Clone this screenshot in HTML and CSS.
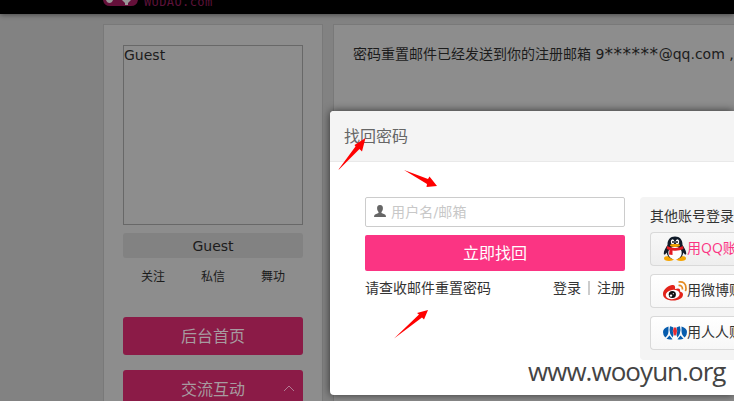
FILE: index.html
```html
<!DOCTYPE html>
<html lang="zh-CN">
<head>
<meta charset="utf-8">
<title>找回密码</title>
<link rel="stylesheet" href="styles.css">
</head>
<body>
<header class="topbar">
  <svg class="logo" width="36" height="7" viewBox="0 0 36 7"><path d="M0 0H35Q34 6 28 6H7Q1 6 0 0Z" fill="#65103a"/><path d="M3 0H10Q9 3 6.500 3Q4 3 3 0ZM19 0H28L25 3V5H22V3Z" fill="#999"/></svg>
  <span class="brand">WUDAO.com</span>
</header>
<div class="page">
  <aside class="sidebar">
    <div class="avatar">Guest</div>
    <div class="name">Guest</div>
    <nav class="links"><span>关注</span><span>私信</span><span>舞功</span></nav>
    <div class="menu">后台首页</div>
    <div class="menu">交流互动<svg class="caret" width="12" height="7" viewBox="0 0 12 7"><path d="M1 6L6 1L11 6" fill="none" stroke="#b17b93"/></svg></div>
  </aside>
  <main class="content">密码重置邮件已经发送到你的注册邮箱 <span>9<span class="stars">******</span>@qq.com</span> ,</main>
</div>
<section class="dialog">
  <h1 class="dialog-title">找回密码</h1>
  <div class="dialog-body">
    <div class="form">
      <div class="field">
        <svg width="12" height="12" viewBox="0 0 12 12"><path d="M6 0C3.800 0 2.900 1.500 3.100 3.600C3.200 5.300 3.800 6.200 4.500 7V8L1 9.500Q0 10 0 12H12Q12 10 11 9.500L7.500 8V7C8.300 6.200 8.800 5.300 8.900 3.600C9.100 1.500 8.200 0 6 0Z" fill="#666"/></svg>
        <span>用户名/邮箱</span>
      </div>
      <div class="submit">立即找回</div>
      <div class="hint"><span>请查收邮件重置密码</span><span class="auth">登录<i></i>注册</span></div>
    </div>
    <div class="social">
      <div class="social-title">其他账号登录</div>
      <div class="account qq">
        <svg width="24" height="26" viewBox="0 0 24 26"><ellipse cx="6" cy="22.500" rx="5" ry="2.400" fill="#f5a400"/><ellipse cx="18" cy="22.500" rx="5" ry="2.400" fill="#f5a400"/><path d="M12 .5C7 .5 4.300 4 4.500 9C2.500 12 0 16 1 18.500C2 19 3 17.500 3.700 16.500C4.500 21 7 23 12 23S19.500 21 20.300 16.500C21 17.500 22 19 23 18.500C24 16 21.500 12 19.500 9C19.700 4 17 .5 12 .5Z" fill="#111b29"/><ellipse cx="12" cy="17" rx="6.700" ry="6.500" fill="#fff"/><ellipse cx="9.600" cy="5.700" rx="1.800" ry="2.500" fill="#fff"/><ellipse cx="14.400" cy="5.700" rx="1.800" ry="2.500" fill="#fff"/><circle cx="10" cy="6" r=".9"/><circle cx="14" cy="6" r=".9"/><ellipse cx="12" cy="9.500" rx="5" ry="1.400" fill="#f5a400"/><path d="M4 10Q12 14 20 10L20.500 13Q15 15.500 9.500 14.500V19L6 18.500L6.500 14Q4.500 13.500 3.700 12.500Z" fill="#e21b23"/></svg><span>用QQ账</span>
      </div>
      <div class="account">
        <svg width="24" height="20" viewBox="0 0 24 20"><path d="M9 4C4 5 0 9 0 13C0 17 4 19.500 10 19.500C16 19.500 20 17 20 13.500C20 11.500 18.500 11 17 10.500C17.500 8 16.500 6.500 12 8C12.500 5 11.500 3.500 9 4Z" fill="#e2231a"/><ellipse cx="9.700" cy="13.500" rx="7" ry="4.600" fill="#fff" transform="rotate(-8 9.700 13.500)"/><circle cx="9.300" cy="13.500" r="3.600" fill="#111"/><circle cx="8" cy="14.600" r="1.200" fill="#fff"/><circle cx="10.300" cy="12.700" r=".6" fill="#fff"/><path d="M15.500 1Q23 0 23 7.500Q23 9 22.300 10M15.500 4.500Q19.500 4 19.500 8.500" fill="none" stroke="#e58b20" stroke-width="1.700"/></svg><span>用微博账</span>
      </div>
      <div class="account">
        <svg width="24" height="14" viewBox="0 0 24 14"><g fill="#075cad"><path d="M5.500 .5V5Q5.500 9 2.200 11.500Q0 9.500 0 6Q0 2 5.500 .5ZM18.500 .5V5Q18.500 9 21.800 11.500Q24 9.500 24 6Q24 2 18.500 .5ZM7 .3Q9 .6 10.500 1.500Q9 5 10.500 9L9.500 11.500Q6.500 8 6.500 4ZM17 .3Q15 .6 13.500 1.500Q15 5 13.500 9L14.500 11.500Q17.500 8 17.500 4Z"/><path d="M6.500 9.500L9.500 13.200Q6.500 14 3.500 12.800ZM17.500 9.500L20.500 12.800Q17.500 14 14.500 13.200Z"/></g><path d="M12 1Q14 2 14 5Q14 8 12 10Q10 8 10 5Q10 2 12 1Z" fill="#e62c32"/></svg><span>用人人账</span>
      </div>
    </div>
  </div>
</section>
<svg class="marks" width="734" height="401" viewBox="0 0 734 401" fill="#f00"><path d="M338.500 169.500L355.500 146.500L354.500 145L365.500 138L362 151.500L359.500 149L339 169.500Z"/><path d="M404 170L428 179L429.500 176.500L437 186L426.500 187L427 184Z"/><path d="M394 338.500L419 314.500L417 313L428 310L424 319.500L422 317.500Z"/></svg>
<div class="watermark">www.wooyun.org</div>
</body>
</html>
```
FILE: styles.css
```css
* { box-sizing: border-box; }
html { overflow: hidden; }
body {
  margin: 0;
  width: 734px;
  height: 401px;
  overflow: hidden;
  position: relative;
  background: #828282;
  color: #1c1c1c;
  font: 14px/20px "DejaVu Sans", "Noto Sans CJK SC", sans-serif;
}
.topbar {
  height: 14px;
  padding-left: 103px;
  display: flex;
  background: #000;
  box-shadow: 0 1px 5px rgba(0, 0, 0, .45);
}
.brand {
  margin: -5px 0 0 5px;
  color: #5c1239;
  font: 12px/14px "DejaVu Sans Mono", monospace;
  letter-spacing: .4px;
}
.page { display: flex; gap: 10px; height: 387px; padding: 10px 0 0 103px; }
.sidebar {
  width: 220px;
  flex: none;
  padding: 20px 19px 0;
  border: 1px solid #797979;
  border-bottom: 0;
  background: #8d8d8d;
  overflow: hidden;
}
.avatar { height: 180px; border: 1px solid #686868; line-height: 18px; }
.name {
  height: 25px;
  margin-top: 8px;
  border-radius: 3px;
  background: #828282;
  text-align: center;
  line-height: 26px;
}
.links { display: flex; margin: 9px 0 30px; font-size: 12px; }
.links span { flex: 1; text-align: center; }
.menu {
  position: relative;
  height: 38px;
  margin-bottom: 15px;
  border-radius: 3px;
  background: #8b1b47;
  color: #a79ba0;
  text-align: center;
  font-size: 16px;
  line-height: 39px;
}
.caret { position: absolute; right: 8px; top: 15px; }
.content {
  flex: 1;
  padding: 19px 0 0 19px;
  border: 1px solid #797979;
  border-width: 1px 0 0 1px;
  background: #8d8d8d;
  white-space: nowrap;
}
.stars { font-size: 17px; line-height: 1; letter-spacing: .55px; vertical-align: -1px; }
.dialog {
  position: absolute;
  left: 330px;
  top: 111px;
  width: 404px;
  height: 284px;
  overflow: hidden;
  border-radius: 4px 0 0 4px;
  background: #fff;
  color: #333;
  box-shadow: 0 0 8px rgba(0, 0, 0, .65);
}
.dialog-title {
  height: 51px;
  margin: 0;
  padding-left: 14px;
  border-bottom: 1px solid #e9e9e9;
  background: #f4f4f4;
  color: #666;
  font-size: 16px;
  font-weight: 400;
  line-height: 51px;
}
.dialog-body { display: flex; gap: 15px; padding: 35px 0 0 35px; }
.form { width: 260px; flex: none; }
.field {
  height: 30px;
  padding-left: 8px;
  display: flex;
  align-items: center;
  gap: 5px;
  border: 1px solid #ccc;
  border-radius: 2px;
  color: #c8c8c8;
}
.field svg { margin-bottom: 2px; }
.field span { letter-spacing: .15px; }
.submit {
  height: 36px;
  margin: 8px 0 7px;
  border-radius: 2px;
  background: #fb3483;
  color: #fff;
  font-size: 16px;
  line-height: 37px;
  text-align: center;
}
.hint { display: flex; justify-content: space-between; }
.auth { display: flex; align-items: center; }
.auth i { width: 2px; height: 14px; margin: 0 7px; background: #ccc; }
.social {
  flex: 1;
  min-width: 0;
  height: 163px;
  padding: 9px 0 0 10px;
  border-radius: 4px 0 0 4px;
  background: #f4f4f4;
  white-space: nowrap;
}
.social-title { margin-bottom: 6px; }
.account {
  height: 34px;
  margin-bottom: 8px;
  padding-left: 12px;
  display: flex;
  align-items: center;
  border: 1px solid #d9d9d9;
  border-right: 0;
  border-radius: 4px 0 0 4px;
  background: linear-gradient(#fff, #f7f7f7);
}
.account svg { flex: none; }
.account span { font-family: "Open Sans", "Noto Sans CJK SC", sans-serif; padding-bottom: 2px; }
.qq { background: linear-gradient(#f8f8f8, #eee); color: #fb3483; }
.marks { position: absolute; left: 0; top: 0; }
.watermark {
  position: absolute;
  left: 528px;
  top: 353px;
  color: #444;
  font: 26px/36px "Open Sans", sans-serif;
  letter-spacing: -.95px;
}
```
